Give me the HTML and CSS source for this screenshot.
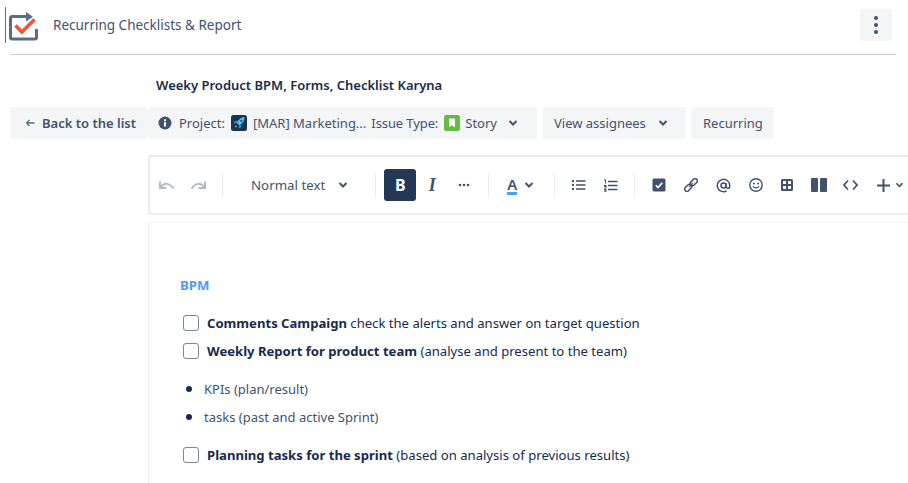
FILE: index.html
```html
<!DOCTYPE html>
<html lang="en">
<head>
    <meta charset="UTF-8">
    <title>Recurring Checklists & Report</title>
    <link rel="stylesheet" href="styles.css">
</head>
<body>
    <!-- Header -->
    <header class="header">
        <svg class="logo" width="29" height="31" viewBox="0 0 29 31">
            <path d="M17 6.500H3a1.500 1.500 0 0 0-1.500 1.500V27.500A1.500 1.500 0 0 0 3 29h23a1.500 1.500 0 0 0 1.500-1.500V19" fill="none" stroke="#5a6b8c" stroke-width="3"/>
            <path d="M17 .5l7 6-7 6z" fill="#5a6b8c" transform="scale(1 .8) translate(0 2)"/>
            <path d="M6.500 15.500l6.500 6.500L25.500 9.500" fill="none" stroke="#f4532c" stroke-width="3.600"/>
        </svg>
        <span class="app-title">Recurring Checklists &amp; Report</span>
        <button class="more-btn">
            <span class="dot"></span><span class="dot"></span><span class="dot"></span>
        </button>
    </header>

    <h1 class="page-title">Weeky Product BPM, Forms, Checklist Karyna</h1>

    <!-- Action bar -->
    <div class="actions">
        <button class="pill back-btn">
            <svg width="12" height="12" viewBox="0 0 12 12"><path d="M10.500 6H2.500M5.500 3L2.500 6l3 3" fill="none" stroke="#5e6c84" stroke-width="1.300"/></svg>
            Back to the list
        </button>
        <button class="pill meta-btn">
            <svg class="info" width="14" height="14" viewBox="0 0 14 14"><circle cx="7" cy="7" r="6.500" fill="#42526e"/><rect x="6" y="6" width="2" height="4.500" fill="#fff"/><rect x="6" y="3.300" width="2" height="1.800" fill="#fff"/></svg>
            <span class="meta-label">Project:</span>
            <svg class="avatar" width="16" height="16" viewBox="0 0 16 16"><rect width="16" height="16" rx="2.500" fill="#1c3350"/><path d="M13.500 2c-3.500.3-6 2.500-7.800 5.800l2.500 2.500c3.300-1.800 5.500-4.300 5.300-8.300z" fill="#4fc3e8"/><path d="M6.500 5.500L3.500 6 2.500 8.500l3.200-.4zM10.500 9.500L10 12.500 7.500 13.500l.4-3.200z" fill="#2a8fc0"/><path d="M5 10.500l-1.500 2 2.500-1z" fill="#9fe3f4"/><circle cx="10.300" cy="5.700" r="1" fill="#1c3350"/></svg>
            <span class="meta-project">[MAR] Marketing...</span>
            <span class="meta-issue">Issue Type:</span>
            <svg class="avatar" width="16" height="16" viewBox="0 0 16 16"><rect width="16" height="16" rx="2" fill="#65ba43"/><path d="M5 3.500h6v9L8 10.300 5 12.500z" fill="#fff"/></svg>
            <span class="meta-story">Story</span>
            <svg class="chev" width="10" height="6" viewBox="0 0 10 6"><path d="M1.500 1L5 4.500 8.500 1" fill="none" stroke="#42526e" stroke-width="2"/></svg>
        </button>
        <button class="pill assignees-btn">
            View assignees
            <svg class="chev" width="10" height="6" viewBox="0 0 10 6"><path d="M1.500 1L5 4.500 8.500 1" fill="none" stroke="#42526e" stroke-width="2"/></svg>
        </button>
        <button class="pill recurring-btn">Recurring</button>
    </div>

    <!-- Editor -->
    <div class="editor-wrap">
        <div class="toolbar">
            <div class="tool-group history">
                <svg width="17" height="11" viewBox="0 0 17 11"><path d="M2 1.500V8h6.500M2.500 7.500c3.500-5 9-5 13 1" fill="none" stroke="#b3bac5" stroke-width="2"/></svg>
                <svg width="17" height="11" viewBox="0 0 17 11"><path d="M15 1.500V8H8.500M14.500 7.500c-3.500-5-9-5-13 1" fill="none" stroke="#b3bac5" stroke-width="2"/></svg>
            </div>
            <div class="sep"></div>
            <div class="text-style">
                Normal text
                <svg class="chev" width="10" height="6" viewBox="0 0 10 6"><path d="M1.500 1L5 4.500 8.500 1" fill="none" stroke="#42526e" stroke-width="2"/></svg>
            </div>
            <div class="sep"></div>
            <div class="tool-group format">
                <span class="bold-btn">B</span>
                <span class="italic-btn">I</span>
                <svg width="12" height="4" viewBox="0 0 12 4"><circle cx="2" cy="2" r="1.300" fill="#42526e"/><circle cx="6" cy="2" r="1.300" fill="#42526e"/><circle cx="10" cy="2" r="1.300" fill="#42526e"/></svg>
            </div>
            <div class="sep"></div>
            <div class="tool-group color">
                <span class="color-a">A</span>
                <svg class="chev" width="10" height="6" viewBox="0 0 10 6"><path d="M1.500 1L5 4.500 8.500 1" fill="none" stroke="#42526e" stroke-width="2"/></svg>
            </div>
            <div class="sep"></div>
            <div class="tool-group lists">
                <svg width="14" height="12" viewBox="0 0 14 12"><path d="M0 1h2v2H0zM0 5h2v2H0zM0 9h2v2H0zM4 1.200h9.500v1.600H4zM4 5.200h9.500v1.600H4zM4 9.200h9.500v1.600H4z" fill="#42526e"/></svg>
                <svg width="14" height="13" viewBox="0 0 14 13"><path d="M4 1.700h9.500v1.600H4zM4 5.700h9.500v1.600H4zM4 9.700h9.500v1.600H4zM0 .5h2v4H1V1.500H0zM0 6h2.500v3.500H0v-.8h1.500V8H0zM0 10h2.500v2.800H0V12h1.500v-.4H0z" fill="#42526e"/></svg>
            </div>
            <div class="sep"></div>
            <div class="tool-group inserts">
                <svg width="14" height="14" viewBox="0 0 14 14"><rect x=".5" y=".5" width="13" height="13" rx="1.500" fill="#42526e"/><path d="M3.800 7.300l2.200 2.200 4.200-4.600" fill="none" stroke="#fff" stroke-width="1.600"/></svg>
                <svg width="14" height="14" viewBox="0 0 14 14"><g fill="none" stroke="#42526e" stroke-width="1.500" transform="rotate(-45 7 7)"><rect x="-1" y="4.800" width="8" height="4.400" rx="2.200"/><rect x="7" y="4.800" width="8" height="4.400" rx="2.200"/><path d="M4.500 7h5"/></g></svg>
                <svg width="15" height="15" viewBox="0 0 15 15"><g fill="none" stroke="#42526e" stroke-width="1.500"><circle cx="7.500" cy="7.500" r="2.500"/><path d="M10 5v3.500a1.800 1.800 0 0 0 3.700 0V7.500a6.200 6.200 0 1 0-3 5.300"/></g></svg>
                <svg width="14" height="14" viewBox="0 0 14 14"><circle cx="7" cy="7" r="6.200" fill="none" stroke="#42526e" stroke-width="1.400"/><circle cx="4.900" cy="5.500" r="1" fill="#42526e"/><circle cx="9.100" cy="5.500" r="1" fill="#42526e"/><path d="M4 8.300c1.200 2.200 4.800 2.200 6 0" fill="none" stroke="#42526e" stroke-width="1.300"/></svg>
                <svg width="12" height="12" viewBox="0 0 12 12"><path fill-rule="evenodd" d="M1.500 0h9A1.500 1.500 0 0 1 12 1.500v9a1.500 1.500 0 0 1-1.500 1.500h-9A1.500 1.500 0 0 1 0 10.500v-9A1.500 1.500 0 0 1 1.500 0zM2 2v3h3V2zM7 2v3h3V2zM2 7v3h3V7zM7 7v3h3V7z" fill="#42526e"/></svg>
                <svg class="columns-icon" width="16" height="14" viewBox="0 0 16 14"><rect width="7" height="14" rx="1" fill="#42526e"/><rect x="9" width="7" height="14" rx="1" fill="#42526e"/></svg>
                <svg class="code-icon" width="15" height="12" viewBox="0 0 15 12"><path d="M5 1.500L1 6l4 4.500M10 1.500L14 6l-4 4.500" fill="none" stroke="#42526e" stroke-width="1.700"/></svg>
                <span class="plus-group">
                    <svg width="13" height="13" viewBox="0 0 13 13"><path d="M5.500 0h2v5.500H13v2H7.500V13h-2V7.500H0v-2h5.500z" fill="#42526e"/></svg>
                    <svg class="chev" width="9" height="6" viewBox="0 0 10 6"><path d="M1.500 1L5 4.500 8.500 1" fill="none" stroke="#42526e" stroke-width="1.800"/></svg>
                </span>
            </div>
        </div>

        <div class="doc">
            <h2 class="doc-heading">BPM</h2>
            <div class="task"><span class="box"></span><p><strong>Comments Campaign</strong> check the alerts and answer on target question</p></div>
            <div class="task"><span class="box"></span><p><strong>Weekly Report for product team</strong> (analyse and present to the team)</p></div>
            <ul class="bullets">
                <li>KPIs (plan/result)</li>
                <li>tasks (past and active Sprint)</li>
            </ul>
            <div class="task"><span class="box"></span><p><strong>Planning tasks for the sprint</strong> (based on analysis of previous results)</p></div>
        </div>
    </div>
</body>
</html>
```
FILE: styles.css
```css
/* Basic reset */
* {
    margin: 0;
    padding: 0;
    box-sizing: border-box;
}

html, body {
    height: 100%;
    overflow: hidden;
}

body {
    font-family: "Noto Sans", "Open Sans", sans-serif;
    font-size: 13px;
    color: #172b4d;
    background: #fff;
}

button {
    font: inherit;
    border: none;
}

/* Header */
.header {
    position: relative;
    display: flex;
    align-items: center;
    height: 55px;
    margin: 0 12px 0 10px;
    padding-bottom: 4px;
    border-bottom: 1px solid #ccc;
}

.header::before {
    content: '';
    position: absolute;
    left: -5px;
    top: 7px;
    width: 1px;
    height: 36px;
    background: #5a6b8c;
}

.logo {
    margin-left: -1px;
}

.app-title {
    margin-left: 15px;
    font-size: 13.5px;
    color: #42526e;
}

.more-btn {
    margin-left: auto;
    margin-right: 4px;
    width: 32px;
    height: 32px;
    background: #f4f5f7;
    border-radius: 3px;
    display: flex;
    flex-direction: column;
    align-items: center;
    justify-content: center;
    gap: 3px;
}

.dot {
    width: 4px;
    height: 4px;
    border-radius: 50%;
    background: #42526e;
}

.page-title {
    margin: 20px 0 0 156px;
    font-size: 13px;
    line-height: 20px;
    font-weight: 600;
}

/* Action bar */
.actions {
    display: flex;
    margin: 12px 0 0 10px;
}

.pill {
    display: flex;
    align-items: center;
    height: 32px;
    background: #f4f5f7;
    border-radius: 3px;
    color: #42526e;
    white-space: nowrap;
}

.back-btn {
    width: 138px;
    padding-left: 14px;
    gap: 6px;
    font-weight: 600;
}

.meta-btn {
    width: 389px;
    padding-left: 10px;
}

.meta-label {
    margin-left: 7px;
}

.meta-btn .avatar {
    margin-left: 6px;
}

.meta-project {
    margin-left: 6px;
    margin-right: 5px;
}

.meta-issue {
    letter-spacing: -0.1px;
}

.meta-story {
    margin-left: 5px;
}

.meta-btn .chev {
    margin-left: 11px;
}

.assignees-btn {
    margin-left: 5px;
    width: 144px;
    padding-left: 12px;
    gap: 12px;
}

.recurring-btn {
    margin-left: 5px;
    width: 83px;
    padding-left: 12px;
}

/* Editor */
.editor-wrap {
    margin: 16px 0 0 148px;
    width: 900px;
}

.toolbar {
    display: flex;
    align-items: center;
    height: 60px;
    border: 2px solid #ebecf0;
    border-right: none;
    border-radius: 3px 0 0 3px;
    padding-left: 8px;
    color: #42526e;
}

.sep {
    width: 1px;
    height: 24px;
    background: #ebecf0;
}

.tool-group {
    display: flex;
    align-items: center;
}

.history {
    gap: 15px;
    margin-right: 15px;
}

.text-style {
    display: flex;
    align-items: center;
    gap: 13px;
    margin: 0 27px 0 28px;
    font-size: 13.3px;
}

.format {
    margin: 0 18px 0 8px;
}

.bold-btn {
    width: 32px;
    height: 32px;
    background: #253858;
    color: #fff;
    border-radius: 3px;
    font-size: 16px;
    font-weight: 700;
    display: flex;
    align-items: center;
    justify-content: center;
}

.italic-btn {
    width: 32px;
    text-align: center;
    font-family: "Liberation Serif", serif;
    font-size: 18px;
    font-style: italic;
    font-weight: 700;
}

.format svg {
    margin-left: 10px;
}

.color {
    gap: 7px;
    margin: 0 20px 0 18px;
}

.color-a {
    font-size: 15px;
    font-weight: 600;
    line-height: 16px;
    border-bottom: 3px solid #4c9aff;
}

.lists {
    gap: 18px;
    margin: 0 16px 0 17px;
}

.inserts {
    margin-left: 17px;
}

.inserts > svg, .plus-group {
    margin-right: 18px;
}

.inserts > .columns-icon {
    margin-right: 16px;
}

.inserts > .code-icon {
    margin-right: 19px;
}

.plus-group {
    display: flex;
    align-items: center;
    gap: 5px;
}

/* Document */
.doc {
    height: 300px;
    margin-top: 7px;
    padding: 52px 0 0 31px;
    border-left: 1px solid #ebecf0;
    border-top: 1px solid #f4f5f7;
    border-radius: 3px 0 0 0;
    font-size: 13.1px;
}

.doc-heading {
    font-size: 13.2px;
    line-height: 20px;
    font-weight: 700;
    color: #4c9aff;
    margin-bottom: 14px;
}

.task {
    display: flex;
    align-items: center;
    height: 28px;
    padding-left: 3px;
}

.task p {
    margin-left: 8px;
}

.task strong {
    font-weight: 700;
}

.box {
    width: 16px;
    height: 16px;
    border: 1px solid #7a869a;
    border-radius: 3px;
}

.bullets {
    margin: 9px 0 11px 24px;
    font-size: 13px;
    color: #42526e;
}

.bullets li {
    height: 28px;
    line-height: 28px;
}

.bullets li::marker {
    color: #172b4d;
    font-size: 16px;
}
```
